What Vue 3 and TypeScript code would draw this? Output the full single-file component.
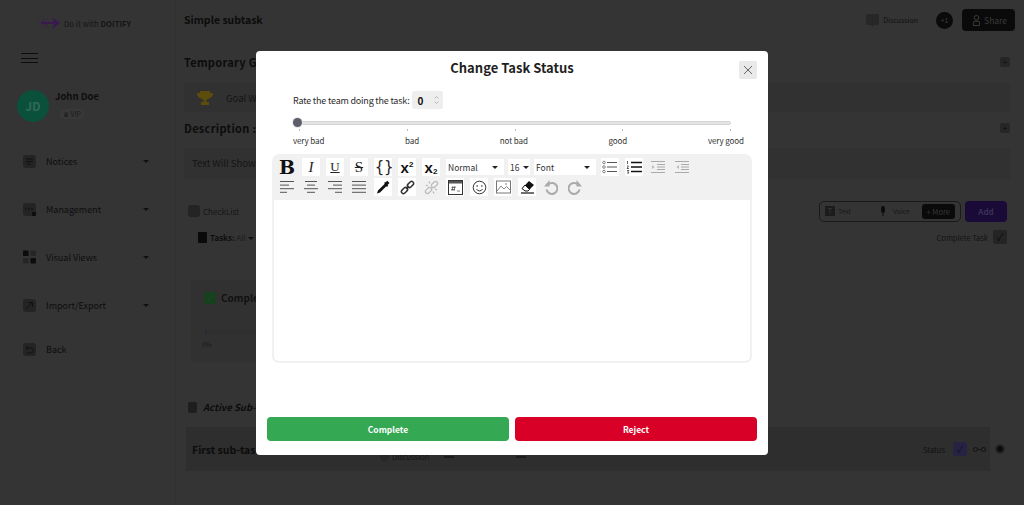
<script setup lang="ts">
import { ref } from 'vue'

const rating = ref(0)
const ratingLabels = ['very bad', 'bad', 'not bad', 'good', 'very good']
const menu = [
  { name: 'Notices', icon: 'notice', caret: true },
  { name: 'Management', icon: 'manage', caret: true },
  { name: 'Visual Views', icon: 'views', caret: true },
  { name: 'Import/Export', icon: 'arrow', caret: true },
  { name: 'Back', icon: 'back', caret: false },
]
const alignLines: Record<string, number[][]> = {
  left: [[1, 15], [1, 10], [1, 15], [1, 8]],
  center: [[2, 14], [4, 12], [1, 15], [4, 12]],
  right: [[1, 15], [6, 15], [1, 15], [8, 15]],
  justify: [[1, 15], [1, 15], [1, 15], [1, 15]],
}
</script>

<template>
  <div class="page">
    <aside class="side">
      <div class="logo">
        <svg width="22" height="14" viewBox="0 0 22 14">
          <path d="M13 1l8 6-8 6 2-5H2V6h13z" fill="#3a1850" />
          <path d="M0 5h7M2 9h7M4 3h6M4 11h6" stroke="#3a1850" stroke-width="1" stroke-dasharray="1 1" />
        </svg>
        <span>Do it with <b>DOITIFY</b></span>
      </div>
      <div class="burger"><i></i><i></i><i></i></div>
      <div class="user">
        <div class="avatar">JD</div>
        <div>
          <div class="uname">John Doe</div>
          <div class="vip">♛ VIP</div>
        </div>
      </div>
      <nav class="menu">
        <div v-for="m in menu" :key="m.name" class="mitem">
          <span class="micon" :class="m.icon">
            <svg v-if="m.icon === 'notice'" viewBox="0 0 13 13" width="13" height="13">
              <path d="M3 4h7M3 6.500h7M4 9h4" stroke="#111" stroke-width="1" />
            </svg>
            <svg v-else-if="m.icon === 'manage'" viewBox="0 0 13 13" width="13" height="13">
              <path d="M3 5v2M6 5v2M9 5v2" stroke="#111" stroke-width="1.200" />
              <rect x="9" y="9" width="4" height="4" rx="1" fill="#0c0c0c" />
            </svg>
            <svg v-else-if="m.icon === 'views'" viewBox="0 0 14 14" width="14" height="14">
              <rect x="0" y="0" width="6" height="6" rx="1" fill="#0c0c0c" />
              <rect x="8" y="0" width="6" height="6" rx="1" fill="#262626" />
              <rect x="0" y="8" width="6" height="6" rx="1" fill="#262626" />
              <rect x="8" y="8" width="6" height="6" rx="1" fill="#0c0c0c" />
            </svg>
            <svg v-else-if="m.icon === 'arrow'" viewBox="0 0 13 13" width="13" height="13">
              <path d="M3 10l6.500-6.500M5 3.500h4.500V8" stroke="#111" stroke-width="1" fill="none" />
            </svg>
            <svg v-else viewBox="0 0 13 13" width="13" height="13">
              <path d="M5 3L3 5l2 2M3 5h5a2.500 2.500 0 0 1 0 5H4" stroke="#111" stroke-width="1" fill="none" />
            </svg>
          </span>
          <span class="mname">{{ m.name }}</span>
          <span v-if="m.caret" class="mcaret"></span>
        </div>
      </nav>
    </aside>

    <main class="main">
      <header class="top">
        <h1>Simple subtask</h1>
        <div class="topright">
          <svg width="13" height="13" viewBox="0 0 13 13">
            <path d="M2 0h9a2 2 0 0 1 2 2v7a2 2 0 0 1-2 2H8l-1.500 2L5 11H2a2 2 0 0 1-2-2V2a2 2 0 0 1 2-2z" fill="#272727" />
          </svg>
          <span class="disc">Discussion</span>
          <span class="plus1">+1</span>
          <span class="share">
            <svg width="7" height="11" viewBox="0 0 9 14">
              <circle cx="4.500" cy="3.500" r="3" fill="none" stroke="#4a4a4a" />
              <path d="M.5 13.500V10a2 2 0 0 1 2-2h4a2 2 0 0 1 2 2v3.500z" fill="none" stroke="#4a4a4a" />
            </svg>
            Share
          </span>
        </div>
      </header>

      <div class="heading"><h2>Temporary Goal :</h2><span class="addsq">+</span></div>
      <div class="goal">
        <svg width="16" height="16" viewBox="0 0 16 16">
          <path d="M3 1h10v2h3c0 3-1.500 5-4 5.500L9.500 10v2H12v3H4v-3h2.500v-2L4 8.500C1.500 8 0 6 0 3h3z" fill="#5c4d0c" />
        </svg>
        <span>Goal Will</span>
      </div>

      <div class="heading desc"><h2>Description :</h2><span class="addsq">+</span></div>
      <div class="descbox">Text Will Show Here</div>

      <div class="checkrow">
        <span class="clabel"><span class="micon small"></span>CheckList</span>
        <div class="checkright">
          <div class="inputs">
            <span class="kind">
              <span class="ticon">T</span> Text
            </span>
            <span class="kind voice">
              <svg width="6" height="10" viewBox="0 0 6 10"><rect x="1" y="0" width="4" height="7" rx="2" fill="#0c0c0c" /><path d="M3 7v3" stroke="#0c0c0c" /></svg>
              Voice
            </span>
            <span class="more">+ More</span>
          </div>
          <span class="addbtn">Add</span>
        </div>
      </div>

      <div class="taskrow">
        <span class="tasks">
          <span class="docicon"></span><b>Tasks:</b> <em>All</em> <span class="mcaret"></span>
        </span>
        <span class="ctask">Complete Task <span class="cbox">✓</span></span>
      </div>

      <section class="progress">
        <div class="phead">
          <span class="greenbox">✓</span><b>Complete</b>
        </div>
        <div class="bar"></div>
        <div class="pct">0%</div>
      </section>

      <div class="active">
        <span class="clip"></span><b>Active Sub-Tasks</b>
      </div>
      <div class="subrow">
        <b>First sub-task</b>
        <div class="submeta">
          <span class="chat"></span>Discussion<span class="tick first"></span><span class="tick second"></span>
        </div>
        <div class="subright">
          <span>Status</span>
          <span class="statbox">✓</span>
          <span class="dots"><i></i><u></u><i></i></span>
          <span class="target"></span>
        </div>
      </div>
    </main>

    <div class="overlay">
      <div class="dialog">
        <h3>Change Task Status</h3>
        <button class="close" type="button" aria-label="Close">
          <svg width="10" height="10" viewBox="0 0 10 10">
            <path d="M1 1l8 8M9 1l-8 8" stroke="#666" stroke-width="1" />
          </svg>
        </button>

        <div class="rate">
          <span>Rate the team doing the task:</span>
          <div class="spin">
            <b>{{ rating }}</b>
            <svg width="5" height="10" viewBox="0 0 5 10">
              <path d="M.5 3.500l2-2 2 2M.5 6.500l2 2 2-2" stroke="#aaa" fill="none" stroke-width=".8" />
            </svg>
          </div>
        </div>

        <div class="slider">
          <div class="track"></div>
          <span class="thumb"></span>
        </div>
        <div class="ticks"><i v-for="n in 5" :key="n"></i></div>
        <div class="labels">
          <span v-for="l in ratingLabels" :key="l">{{ l }}</span>
        </div>

        <div class="editor">
          <div class="toolbar">
            <div class="tbrow">
              <span class="btn t bold">B</span>
              <span class="btn t ital">I</span>
              <span class="btn t under">U</span>
              <span class="btn t strike">S</span>
              <span class="btn t brace">{ }</span>
              <span class="btn t sup"><span>x<sup>2</sup></span></span>
              <span class="btn t sup"><span>x<sub>2</sub></span></span>
              <span class="sel normal">Normal<i></i></span>
              <span class="sel size">16<i></i></span>
              <span class="sel font">Font<i></i></span>
              <span class="btn">
                <svg width="16" height="14" viewBox="0 0 16 14">
                  <circle cx="2" cy="2.500" r="1.300" fill="none" stroke="#555" stroke-width=".7" />
                  <circle cx="2" cy="7" r="1.300" fill="none" stroke="#555" stroke-width=".7" />
                  <circle cx="2" cy="11.500" r="1.300" fill="none" stroke="#555" stroke-width=".7" />
                  <path d="M5 2.500h10M5 7h10M5 11.500h10" stroke="#555" stroke-width="1" />
                </svg>
              </span>
              <span class="btn">
                <svg width="16" height="14" viewBox="0 0 16 14">
                  <path d="M1.500 1v3M1 6h1.500L1 8.500h2M1 10.500h2l-1 1 1 1.500H1" stroke="#222" stroke-width=".7" fill="none" />
                  <path d="M5 2.500h11M5 7h11M5 11.500h11" stroke="#111" stroke-width="1.500" />
                </svg>
              </span>
              <span class="btn plain">
                <svg width="16" height="14" viewBox="0 0 16 14">
                  <path d="M1 1.500h14M7 4.500h8M7 7h8M7 9.500h8M1 12.500h14" stroke="#aaa" />
                  <path d="M2 5l2.500 2L2 9z" fill="#bbb" />
                </svg>
              </span>
              <span class="btn plain">
                <svg width="16" height="14" viewBox="0 0 16 14">
                  <path d="M1 1.500h14M7 4.500h8M7 7h8M7 9.500h8M1 12.500h14" stroke="#aaa" />
                  <path d="M5 5L2.500 7 5 9z" fill="#bbb" />
                </svg>
              </span>
            </div>
            <div class="tbrow">
              <span v-for="(lines, k) in alignLines" :key="k" class="btn plain">
                <svg width="16" height="14" viewBox="0 0 16 14">
                  <path v-for="(l, i) in lines" :key="i" :d="`M${l[0]} ${1.5 + i * 3.6}H${l[1]}`" stroke="#555" stroke-width="1" />
                </svg>
              </span>
              <span class="btn">
                <svg width="14" height="14" viewBox="0 0 14 14">
                  <path d="M11 .5l2.500 2.500-2 2 .7.700-1.200 1.200-.7-.7L4 12.500 1 13.500 2 10.500 8.800 3.700l-.7-.7 1.200-1.200.7.700z" fill="#111" />
                </svg>
              </span>
              <span class="btn">
                <svg width="15" height="15" viewBox="0 0 15 15">
                  <g fill="none" stroke="#333" stroke-width="1.500">
                    <rect x="7" y="2.500" width="7" height="4" rx="2" transform="rotate(-45 10.500 4.500)" />
                    <rect x="1" y="8.500" width="7" height="4" rx="2" transform="rotate(-45 4.500 10.500)" />
                    <path d="M6 9l3-3" />
                  </g>
                </svg>
              </span>
              <span class="btn plain">
                <svg width="15" height="15" viewBox="0 0 15 15">
                  <g fill="none" stroke="#bbb" stroke-width="1.300">
                    <rect x="7" y="2.500" width="7" height="4" rx="2" transform="rotate(-45 10.500 4.500)" />
                    <rect x="1" y="8.500" width="7" height="4" rx="2" transform="rotate(-45 4.500 10.500)" />
                    <path d="M2 5l2 1M5 1.500l1 2M13 10l-2-1M10 13.500l-1-2" />
                  </g>
                </svg>
              </span>
              <span class="btn">
                <svg width="15" height="15" viewBox="0 0 15 15">
                  <rect x=".5" y=".5" width="14" height="14" fill="#fff" stroke="#333" />
                  <rect x="1" y="1" width="13" height="2.500" fill="#555" />
                  <path d="M5 6l-1 5M7 6l-1 5M3.500 7.500h4M3 9.500h4M9 11h3" stroke="#444" stroke-width=".7" />
                </svg>
              </span>
              <span class="btn">
                <svg width="15" height="15" viewBox="0 0 15 15">
                  <circle cx="7.500" cy="7.500" r="6.300" fill="none" stroke="#333" />
                  <circle cx="5.200" cy="6" r=".8" fill="#333" />
                  <circle cx="9.800" cy="6" r=".8" fill="#333" />
                  <path d="M4.500 9a3.300 3.300 0 0 0 6 0" fill="none" stroke="#333" />
                </svg>
              </span>
              <span class="btn">
                <svg width="15" height="14" viewBox="0 0 15 14">
                  <rect x=".5" y="1" width="14" height="12" fill="#fff" stroke="#777" />
                  <path d="M1 11l4-5 3 3 2.500-2.500L14 10" fill="none" stroke="#888" />
                  <circle cx="10" cy="4" r="1" fill="#aaa" />
                </svg>
              </span>
              <span class="btn">
                <svg width="15" height="14" viewBox="0 0 15 14">
                  <path d="M9 1l5 4-6 6H5L2 8.500z" fill="#111" />
                  <path d="M2 8.500L5 11h3l1.500-1.500L5 5z" fill="#fff" stroke="#111" />
                  <path d="M1 13h13" stroke="#111" stroke-width="1.200" />
                </svg>
              </span>
              <span class="btn plain">
                <svg width="14" height="16" viewBox="0 0 14 16">
                  <path d="M4 5.500a5.500 5.500 0 1 1-1.500 5" fill="none" stroke="#aaa" stroke-width="2" />
                  <path d="M5.500 1v6.500H0z" fill="#aaa" />
                </svg>
              </span>
              <span class="btn plain">
                <svg width="14" height="16" viewBox="0 0 14 16">
                  <path d="M10 5.500a5.500 5.500 0 1 0 1.500 5" fill="none" stroke="#aaa" stroke-width="2" />
                  <path d="M8.500 1v6.500H14z" fill="#aaa" />
                </svg>
              </span>
            </div>
          </div>
          <div class="textarea"></div>
        </div>

        <div class="actions">
          <button class="complete" type="button">Complete</button>
          <button class="reject" type="button">Reject</button>
        </div>
      </div>
    </div>
  </div>
</template>

<style scoped>
.page {
  position: relative;
  display: flex;
  width: 1024px;
  height: 505px;
  overflow: hidden;
  background: #343434;
  color: #111;
  font-family: "Noto Sans CJK SC", "Noto Sans", sans-serif;
}
.side {
  width: 176px;
  flex: none;
  border-right: 1px solid #313131;
  box-sizing: border-box;
}
.logo {
  display: flex;
  align-items: center;
  gap: 3px;
  height: 14px;
  margin: 16px 0 0 39px;
  font-size: 7.800px;
  color: #141414;
}
.burger {
  display: flex;
  flex-direction: column;
  gap: 3.500px;
  width: 17px;
  margin: 23px 0 0 21px;
}
.burger i {
  display: block;
  height: 1px;
  background: #0c0c0c;
}
.user {
  display: flex;
  gap: 6px;
  margin: 27px 0 0 17px;
}
.avatar {
  width: 32px;
  height: 32px;
  border-radius: 50%;
  background: #0b503b;
  color: #2f6a56;
  font-size: 12px;
  font-weight: 700;
  line-height: 32px;
  text-align: center;
}
.uname {
  margin-top: -1px;
  font-size: 9.500px;
  font-weight: 700;
  line-height: 14px;
  color: #0e0e0e;
}
.vip {
  width: 24px;
  margin: 6px 0 0 5px;
  border-radius: 4px;
  background: #383838;
  color: #1a1a1a;
  font-size: 7px;
  line-height: 10px;
  text-align: center;
}
.menu {
  margin: 32px 0 0 23px;
}
.mitem {
  display: flex;
  align-items: center;
  height: 14px;
  margin-bottom: 34px;
  font-size: 9px;
  color: #0d0d0d;
}
.mitem:nth-child(4) {
  margin-bottom: 30px;
}
.micon {
  display: flex;
  align-items: center;
  justify-content: center;
  width: 13px;
  height: 13px;
  border-radius: 3px;
  background: #242424;
}
.micon.views {
  background: none;
}
.micon.small {
  display: inline-block;
  width: 12px;
  height: 12px;
  margin-right: 3px;
  vertical-align: -2px;
}
.mname {
  margin-left: 10px;
  width: 97px;
}
.mcaret {
  display: inline-block;
  border-left: 3px solid transparent;
  border-right: 3px solid transparent;
  border-top: 3px solid #0f0f0f;
  vertical-align: middle;
}

.main {
  flex: 1;
  min-width: 0;
  padding: 0 14px 0 8px;
}
.top {
  display: flex;
  align-items: center;
  justify-content: space-between;
  height: 40px;
}
h1,
h2 {
  margin: 0;
  font-weight: 700;
  color: #0c0c0c;
}
h1 {
  font-size: 10.500px;
  margin-top: -2px;
}
h2 {
  font-size: 11px;
  letter-spacing: .3px;
}
.topright {
  display: flex;
  align-items: center;
  margin-right: -5px;
}
.chat {
  width: 9px;
  height: 9px;
  margin-right: 3px;
  border-radius: 50%;
  background: #262626;
}
.disc {
  margin: 0 18px 0 4px;
  font-size: 7px;
  color: #101010;
}
.plus1 {
  width: 17px;
  height: 17px;
  margin-right: 9px;
  border-radius: 50%;
  background: #0a0a0a;
  color: #3c3c3c;
  font-size: 7px;
  line-height: 17px;
  text-align: center;
}
.share {
  display: flex;
  align-items: center;
  gap: 4px;
  height: 22px;
  padding: 0 8px 0 11px;
  border-radius: 4px;
  background: #0a0a0a;
  color: #3a3a3a;
  font-size: 8.500px;
}
.heading {
  display: flex;
  align-items: center;
  justify-content: space-between;
  height: 20px;
  margin-top: 12px;
}
.heading.desc {
  margin-top: 6px;
}
.addsq {
  width: 10px;
  height: 10px;
  border-radius: 2px;
  background: #262626;
  font-size: 8px;
  line-height: 10px;
  text-align: center;
  color: #0c0c0c;
}
.goal {
  display: flex;
  align-items: center;
  gap: 13px;
  height: 29px;
  margin-top: 11px;
  padding-left: 13px;
  background: #313131;
  font-size: 9.500px;
  color: #141414;
}
.descbox {
  height: 31px;
  margin-top: 10px;
  padding-left: 8px;
  background: #313131;
  font-size: 9.500px;
  line-height: 30px;
  color: #141414;
}
.checkrow {
  display: flex;
  align-items: center;
  justify-content: space-between;
  height: 22px;
  margin-top: 21px;
  padding: 0 3px 0 4px;
}
.clabel {
  font-size: 8px;
  color: #151515;
}
.checkright {
  display: flex;
  align-items: center;
  gap: 4px;
}
.inputs {
  display: flex;
  align-items: center;
  box-sizing: border-box;
  width: 142px;
  height: 21px;
  padding: 0 5px 0 5px;
  border: 1px solid #1a1a1a;
  border-radius: 5px;
  font-size: 6.800px;
  color: #181818;
}
.kind {
  display: flex;
  align-items: center;
  flex: none;
  gap: 3px;
  width: 55px;
}
.kind.voice {
  width: 37px;
  gap: 7px;
}
.ticon {
  width: 10px;
  height: 10px;
  background: #1c1c1c;
  color: #353535;
  font-size: 8px;
  line-height: 10px;
  text-align: center;
}
.more {
  margin-left: auto;
  padding: 0 5px;
  border-radius: 3px;
  background: #0a0a0a;
  color: #383838;
  font-size: 7.500px;
  line-height: 15px;
}
.addbtn {
  width: 42px;
  height: 21px;
  border-radius: 4px;
  background: #190a38;
  color: #3a3354;
  font-size: 8px;
  font-weight: 700;
  line-height: 21px;
  text-align: center;
}
.taskrow {
  display: flex;
  align-items: center;
  justify-content: space-between;
  height: 16px;
  margin-top: 7px;
  padding: 0 3px 0 14px;
}
.tasks {
  font-size: 8px;
  color: #0f0f0f;
}
.tasks em {
  font-style: normal;
  color: #1c1c1c;
}
.docicon {
  display: inline-block;
  width: 9px;
  height: 11px;
  margin-right: 3px;
  border-radius: 1px;
  background: #0a0a0a;
  vertical-align: -2px;
}
.ctask {
  display: flex;
  align-items: center;
  gap: 5px;
  font-size: 7.500px;
  color: #121212;
}
.cbox {
  width: 14px;
  height: 14px;
  border-radius: 2px;
  background: #242424;
  color: #0a0a0a;
  font-size: 10px;
  line-height: 14px;
  text-align: center;
}
.progress {
  box-sizing: border-box;
  width: 400px;
  height: 82px;
  margin: 35px 0 0 7px;
  padding: 10px 0 0 13px;
  background: #313131;
  font-size: 10px;
}
.phead {
  display: flex;
  align-items: center;
  gap: 5px;
}
.greenbox {
  width: 12px;
  height: 12px;
  border-radius: 2px;
  background: #17401e;
  color: #1a4d24;
  font-size: 9px;
  line-height: 12px;
  text-align: center;
}
.bar {
  height: 5px;
  margin: 24px 0 0 1px;
  border-left: 1px solid #26263c;
  background: #2f2f2f;
}
.pct {
  margin: 5px 0 0 -2px;
  font-size: 6.500px;
  color: #1a1a1a;
}
.active {
  display: flex;
  align-items: center;
  gap: 6px;
  height: 14px;
  margin: 38px 0 0 4px;
  font-size: 9.500px;
  font-style: italic;
  color: #0c0c0c;
}
.clip {
  width: 9px;
  height: 11px;
  border-radius: 2px;
  background: #1e1e1e;
}
.subrow {
  position: relative;
  display: flex;
  align-items: center;
  width: 804px;
  height: 44px;
  margin: 13px 0 0 2px;
  padding: 0 0 0 6px;
  box-sizing: border-box;
  background: #2e2e2e;
  font-size: 10.500px;
  color: #0c0c0c;
}
.submeta {
  position: absolute;
  left: 194px;
  top: 24px;
  display: flex;
  align-items: center;
  font-size: 7.500px;
  color: #141414;
}
.tick {
  width: 10px;
  height: 2px;
  background: #1c1c1c;
}
.tick.first {
  margin-left: 15px;
}
.tick.second {
  margin-left: 62px;
}
.subright {
  position: absolute;
  left: 737px;
  top: 0;
  display: flex;
  align-items: center;
  gap: 9px;
  height: 44px;
  font-size: 7.500px;
  color: #121212;
}
.statbox {
  flex: none;
  margin-left: -1px;
  width: 14px;
  height: 14px;
  border-radius: 2px;
  background: #262242;
  color: #15112f;
  font-size: 10px;
  line-height: 14px;
  text-align: center;
}
.dots {
  display: flex;
  align-items: center;
  flex: none;
  margin-left: -3px;
}
.dots i {
  width: 3px;
  height: 3px;
  border-radius: 50%;
  border: 1px solid #111;
}
.dots u {
  width: 3px;
  height: 1px;
  background: #111;
}
.target {
  position: absolute;
  left: 74px;
  top: 19px;
  width: 6px;
  height: 6px;
  border-radius: 50%;
  background: #0c0c0c;
  box-shadow: 0 0 0 2px #262626;
}

.overlay {
  position: absolute;
  inset: 0;
  display: flex;
  align-items: flex-start;
  justify-content: center;
  padding-top: 51px;
  box-sizing: border-box;
}
.dialog {
  position: relative;
  box-sizing: border-box;
  width: 512px;
  height: 404px;
  padding: 0 11px;
  border-radius: 4px;
  background: #fff;
  color: #2b2b2b;
}
h3 {
  margin: 0;
  padding-top: 6px;
  height: 23px;
  font-size: 13px;
  font-weight: 700;
  line-height: 22px;
  text-align: center;
  color: #1f1f1f;
}
.close {
  position: absolute;
  right: 11px;
  top: 10px;
  display: flex;
  align-items: center;
  justify-content: center;
  width: 18px;
  height: 18px;
  padding: 0;
  border: 0;
  border-radius: 2px;
  background: #e9e9e9;
}
.rate {
  display: flex;
  align-items: center;
  gap: 3px;
  height: 18px;
  margin: 11px 0 0 26px;
  font-size: 9px;
  letter-spacing: -.2px;
}
.spin {
  display: flex;
  align-items: center;
  justify-content: space-between;
  box-sizing: border-box;
  width: 31px;
  height: 18px;
  padding: 0 4px 0 5px;
  border-radius: 2px;
  background: #eee;
  font-size: 10px;
  color: #111;
}
.slider {
  position: relative;
  height: 8px;
  margin: 10px 26px 0 31px;
}
.track {
  position: absolute;
  left: 0;
  right: 0;
  top: 2px;
  height: 4px;
  box-sizing: border-box;
  border: 1px solid #d5d5d5;
  border-radius: 2px;
  background: #e4e4e4;
}
.thumb {
  position: absolute;
  left: -5px;
  top: -1px;
  width: 9px;
  height: 9px;
  border-radius: 50%;
  background: #5d5d6b;
  box-shadow: 0 0 0 1px #e8e8e8;
}
.ticks {
  display: flex;
  justify-content: space-between;
  height: 3px;
  margin: 2px 26px 0 32px;
}
.ticks i {
  width: 1px;
  height: 2px;
  background: #bbb;
}
.labels {
  display: flex;
  justify-content: space-between;
  margin: 3px 13px 0 26px;
  font-size: 8px;
  letter-spacing: -.1px;
  line-height: 12px;
  color: #333;
}
.editor {
  margin: 7px 5px 0;
  border-radius: 7px;
  background: #f1f1f1;
  padding: 0 2px 2px;
}
.toolbar {
  display: flex;
  flex-direction: column;
  gap: 2px;
  height: 46px;
  box-sizing: border-box;
  padding: 4px 0 0 4px;
}
.tbrow {
  display: flex;
  align-items: center;
  gap: 6px;
  height: 18px;
}
.btn {
  display: flex;
  align-items: center;
  justify-content: center;
  flex: none;
  width: 18px;
  height: 18px;
  background: #fff;
  white-space: nowrap;
}
.btn.plain {
  background: none;
}
.t {
  font-family: "Liberation Serif", serif;
  color: #222;
}
.bold {
  font-family: "DejaVu Serif", serif;
  font-size: 19px;
  font-weight: 700;
  color: #111;
  background: none;
}
.ital {
  font-style: italic;
  font-size: 15px;
}
.under {
  font-size: 13px;
  text-decoration: underline;
}
.strike {
  font-size: 15px;
  text-decoration: line-through;
}
.brace {
  font-family: "DejaVu Sans", sans-serif;
  font-size: 15px;
  letter-spacing: -2.500px;
}
.sup {
  font-family: "Liberation Sans", sans-serif;
  font-size: 15px;
  font-weight: 700;
  color: #111;
}
.sup sup,
.sup sub {
  font-size: 8px;
  line-height: 0;
}
.sup sub {
  vertical-align: -1px;
}
.sel {
  display: flex;
  align-items: center;
  justify-content: space-between;
  flex: none;
  box-sizing: border-box;
  height: 16px;
  padding: 0 6px 0 2px;
  background: #fff;
  font-size: 8.500px;
  color: #333;
}
.sel i {
  border-left: 3px solid transparent;
  border-right: 3px solid transparent;
  border-top: 3px solid #222;
}
.normal {
  width: 58px;
}
.size {
  width: 22px;
  margin-left: -2px;
  padding-right: 1px;
}
.font {
  width: 62px;
  margin: 0 -1px 0 -2px;
}
.textarea {
  height: 161px;
  border-radius: 0 0 5px 5px;
  background: #fff;
}
.actions {
  position: absolute;
  left: 11px;
  right: 11px;
  bottom: 14px;
  display: flex;
  gap: 6px;
}
.actions button {
  flex: 1;
  height: 24px;
  border: 0;
  border-radius: 4px;
  color: #fff;
  font: 700 8.500px "Noto Sans CJK SC", "Noto Sans", sans-serif;
}
.complete {
  background: #34a853;
}
.reject {
  background: #d90027;
}
</style>
